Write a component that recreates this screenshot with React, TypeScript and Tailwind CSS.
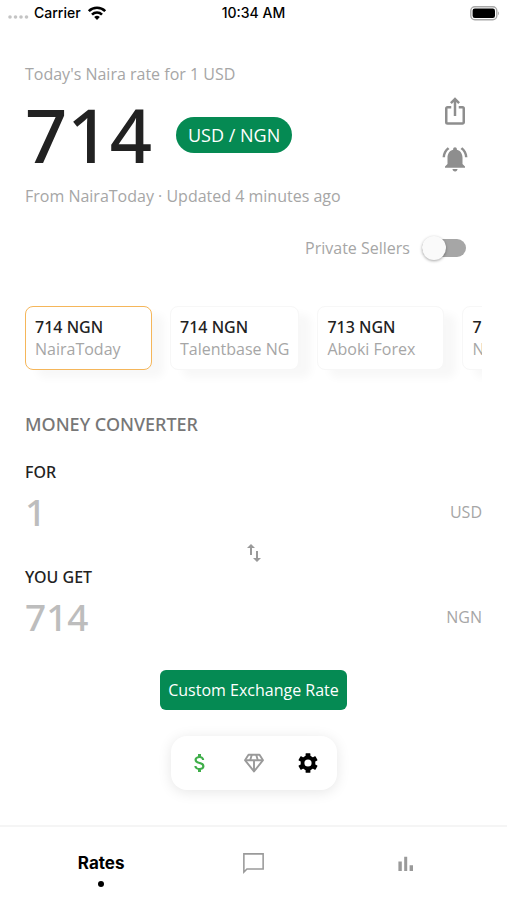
import { useState } from "react";
import {
  MdAttachMoney,
  MdIosShare,
  MdNotificationsActive,
  MdSwapVert,
} from "react-icons/md";

interface Seller {
  id: number;
  name: string;
  rate: number;
}

const StatusBar = () => {
  return (
    <div className="grid h-[26px] grid-cols-3 items-center px-2 font-['Inter',sans-serif] text-sm font-medium text-black">
      <div className="flex items-center gap-1">
        <svg width="22" height="12" viewBox="0 0 22 12" fill="#c4c4c4">
          <circle cx="2" cy="10" r="1.8" />
          <circle cx="7.5" cy="10" r="1.8" />
          <circle cx="13" cy="10" r="1.8" />
          <circle cx="18.5" cy="10" r="1.8" />
        </svg>
        <span>Carrier</span>
        <svg
          className="ml-0.5"
          width="20"
          height="16"
          viewBox="0 0 20 16"
          fill="none"
          stroke="#000"
          strokeWidth="2.6"
        >
          <path d="M1.8 6.2a11.6 11.6 0 0 1 16.4 0" />
          <path d="M5 9.6a7.1 7.1 0 0 1 10 0" />
          <path d="M10 15l-2.8-2.9a4 4 0 0 1 5.6 0z" fill="#000" stroke="none" />
        </svg>
      </div>
      <span className="text-center">10:34 AM</span>
      <svg
        className="justify-self-end"
        width="30"
        height="15"
        viewBox="0 0 30 15"
      >
        <rect x="1.8" y="0.8" width="26" height="13" rx="4" fill="#fff" stroke="#a8a8a8" strokeWidth="1.4" />
        <rect x="3.6" y="2.6" width="22.4" height="9.4" rx="2.2" fill="#000" />
        <path d="M29 5.4c1.2.6 1.2 3.2 0 3.8z" fill="#a8a8a8" />
      </svg>
    </div>
  );
};

const GemIcon = () => (
  <svg
    width="24"
    height="24"
    viewBox="0 0 24 24"
    fill="none"
    stroke="currentColor"
    strokeWidth="1.9"
    strokeLinejoin="round"
  >
    <path d="M6.5 3.8h11L21 9.2 12 20.4 3 9.2z" />
    <path d="M3 9.2h18M12 9.2v11" />
    <path d="M9.8 3.8 8.2 9.2M14.2 3.8l1.6 5.4" />
  </svg>
);

const GearIcon = () => (
  <svg width="24" height="24" viewBox="0 0 24 24">
    <circle cx="12" cy="12" r="5.5" fill="none" stroke="currentColor" strokeWidth="3.8" />
    {[0, 60, 120, 180, 240, 300].map((angle) => (
      <rect
        key={angle}
        x="9.6"
        y="2.2"
        width="4.8"
        height="4.6"
        rx="0.6"
        fill="currentColor"
        transform={`rotate(${angle} 12 12)`}
      />
    ))}
  </svg>
);

const App = () => {
  const [privateSellers, setPrivateSellers] = useState(false);
  const [selected, setSelected] = useState(1);

  return (
    <div className="flex min-h-screen flex-col overflow-hidden bg-white font-['Open_Sans',sans-serif] text-base text-[#a6a6a6]">
      <StatusBar />

      <main className="flex flex-1 flex-col px-[25px]">
        <p className="mt-9 leading-6">Today's Naira rate for 1 USD</p>

        <div className="flex items-center">
          <h1 className="font-['Noto_Sans',sans-serif] text-[74px] font-medium leading-[98px] text-[#222]">
            714
          </h1>
          <button className="ml-6 h-9 rounded-full bg-[#058a53] px-3 text-lg text-white">
            USD / NGN
          </button>
          <div className="ml-auto mr-3 flex flex-col gap-[18px] text-[#8e8e8e]">
            <button aria-label="Share">
              <MdIosShare size={30} />
            </button>
            <button aria-label="Rate alerts">
              <MdNotificationsActive size={30} />
            </button>
          </div>
        </div>

        <p className="leading-6">From NairaToday · Updated 4 minutes ago</p>

        <label className="mr-4 mt-6 flex h-8 items-center gap-3 self-end">
          Private Sellers
          <span className="relative flex h-7 w-11 items-center">
            <input
              type="checkbox"
              role="switch"
              className="peer h-[18px] w-11 appearance-none rounded-full bg-[#a6a6a6] checked:bg-[#058a53]"
              checked={privateSellers}
              onChange={(e) => setPrivateSellers(e.target.checked)}
            />
            <span className="pointer-events-none absolute left-0 size-6 rounded-full bg-[#fafafa] shadow-[0_1px_3px_rgba(0,0,0,0.35)] peer-checked:left-5" />
          </span>
        </label>

        <div className="mt-[38px] flex gap-[18px] overflow-hidden pb-5 pt-1">
          {sellers.map((seller) => (
            <button
              key={seller.id}
              onClick={() => setSelected(seller.id)}
              className={`h-16 min-w-[127px] shrink-0 rounded-lg border bg-white px-[9px] text-left shadow-[12px_8px_8px_rgba(0,0,0,0.03)] ${
                selected === seller.id ? "border-[#f5b65a]" : "border-[#f7f7f7]"
              }`}
            >
              <span className="block font-['Noto_Sans',sans-serif] font-medium leading-[22px] text-[#222]">
                {seller.rate} NGN
              </span>
              <span className="block leading-[22px]">{seller.name}</span>
            </button>
          ))}
        </div>

        <h2 className="mt-[22px] font-['Noto_Sans',sans-serif] text-lg font-medium leading-6 text-[#777]">
          MONEY CONVERTER
        </h2>

        <label
          htmlFor="for"
          className="mt-6 font-['Noto_Sans',sans-serif] font-medium leading-6 text-[#222]"
        >
          FOR
        </label>
        <div className="flex h-14 items-center">
          <input
            id="for"
            placeholder="1"
            className="min-w-0 flex-1 font-['Noto_Sans',sans-serif] text-[37px] font-medium outline-none placeholder:text-[#bdbdbd]"
          />
          <span>USD</span>
        </div>

        <button
          aria-label="Swap currencies"
          className="flex h-[25px] items-end self-center text-[#9a9a9a]"
        >
          <MdSwapVert size={24} />
        </button>

        <label
          htmlFor="get"
          className="font-['Noto_Sans',sans-serif] font-medium leading-6 text-[#222]"
        >
          YOU GET
        </label>
        <div className="flex h-14 items-center">
          <input
            id="get"
            placeholder="714"
            className="min-w-0 flex-1 font-['Noto_Sans',sans-serif] text-[37px] font-medium outline-none placeholder:text-[#bdbdbd]"
          />
          <span>NGN</span>
        </div>

        <button className="mt-[25px] h-10 self-center rounded-md bg-[#058a53] px-2 text-white">
          Custom Exchange Rate
        </button>

        <div className="mt-[26px] flex h-[54px] w-[166px] items-center justify-center gap-[30px] self-center rounded-2xl bg-white shadow-[0_2px_14px_rgba(0,0,0,0.1)]">
          <button aria-label="Currencies" className="text-[#3fae4a]">
            <MdAttachMoney size={24} />
          </button>
          <button aria-label="Crypto" className="text-[#9a9a9a]">
            <GemIcon />
          </button>
          <button aria-label="Settings" className="text-black">
            <GearIcon />
          </button>
        </div>
      </main>

      <nav className="mt-8 grid h-[75px] grid-cols-3 items-center border-t-2 border-[#f5f5f5] px-[25px] text-[#9a9a9a]">
        <a
          href="#rates"
          className="flex flex-col items-center gap-2 pt-3 font-['Inter',sans-serif] text-[17px] font-bold leading-5 text-black"
        >
          Rates
          <span className="size-1.5 rounded-full bg-black" />
        </a>
        <a href="#news" aria-label="News" className="justify-self-center">
          <svg width="25" height="25" viewBox="0 0 24 24" fill="currentColor">
            <path d="M2 2v20l4-4h16V2H2zm18.5 14.5H5.4L3.5 18.4V3.5h17z" />
          </svg>
        </a>
        <a href="#charts" aria-label="Charts" className="justify-self-center">
          <svg width="24" height="24" viewBox="0 0 24 24" fill="currentColor">
            <path d="M4.4 9.4h3.4V19H4.4zM10.2 4.8h3V19h-3zM15.6 13.2H19V19h-3.4z" />
          </svg>
        </a>
      </nav>
    </div>
  );
};

const sellers: Seller[] = [
  { id: 1, name: "NairaToday", rate: 714 },
  { id: 2, name: "Talentbase NG", rate: 714 },
  { id: 3, name: "Aboki Forex", rate: 713 },
  { id: 4, name: "NGN Rates", rate: 714 },
];

export default App;
